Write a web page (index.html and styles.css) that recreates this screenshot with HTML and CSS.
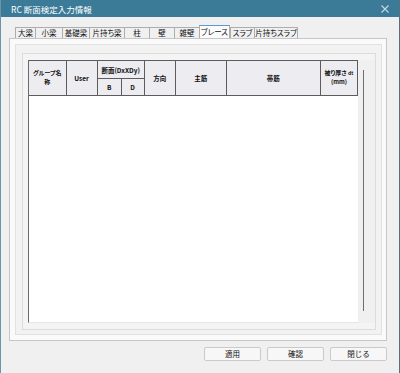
FILE: index.html
```html
<!DOCTYPE html>
<html lang="ja">
<head>
<meta charset="utf-8">
<link rel="stylesheet" href="styles.css">
</head>
<body>
<div class="window">
  <div class="titlebar">
    <span class="title">RC 断面検定入力情報</span>
    <svg class="close" width="10" height="10" viewBox="0 0 10 10"><path d="M1.5 1.5 L8.5 8.5 M8.5 1.5 L1.5 8.5" stroke="#c9d8e0" stroke-width="1.1" fill="none"/></svg>
  </div>
  <div class="content">
    <div class="tabs">
      <div class="tab w20">大梁</div>
      <div class="tab w27">小梁</div>
      <div class="tab w27">基礎梁</div>
      <div class="tab w35">片持ち梁</div>
      <div class="tab w25">柱</div>
      <div class="tab w25">壁</div>
      <div class="tab w25">雑壁</div>
      <div class="tab w31 active">ブレース</div>
      <div class="tab w24">スラブ</div>
      <div class="tab w44">片持ちスラブ</div>
    </div>
    <div class="page">
      <div class="frame-b">
        <div class="frame-c">
          <div class="grid">
            <table class="sheet">
              <colgroup>
                <col class="c1"><col class="c2"><col class="c3"><col class="c4"><col class="c5"><col class="c6"><col class="c7"><col class="c8">
              </colgroup>
              <thead>
                <tr class="r1">
                  <th rowspan="2" class="two"><span class="cell">グループ名<br>称</span></th>
                  <th rowspan="2">User</th>
                  <th colspan="2">断面(DxXDy)</th>
                  <th rowspan="2">方向</th>
                  <th rowspan="2">主筋</th>
                  <th rowspan="2">帯筋</th>
                  <th rowspan="2" class="two"><span class="cell">被り厚さ <span class="dt">dt</span><br>(mm)</span></th>
                </tr>
                <tr class="r2">
                  <th>B</th>
                  <th>D</th>
                </tr>
              </thead>
            </table>
          </div>
          <div class="strip"><div class="strip-line"></div></div>
        </div>
      </div>
    </div>
    <div class="buttons">
      <button class="btn">適用</button>
      <button class="btn">確認</button>
      <button class="btn">閉じる</button>
    </div>
  </div>
</div>
</body>
</html>
```

FILE: styles.css
```css
html, body {
  margin: 0;
  padding: 0;
  background: #f0f0f0;
}
body {
  font-family: "Noto Sans CJK JP", "Noto Sans", sans-serif;
  font-feature-settings: "palt";
}
.window {
  width: 400px;
  height: 373px;
  box-sizing: border-box;
  border-left: 1px solid #6d95a8;
  border-right: 1px solid #55707e;
  background: #f0f0f0;
  display: flex;
  flex-direction: column;
}
.titlebar {
  height: 17px;
  background: #3b7b97;
  display: flex;
  align-items: center;
  justify-content: space-between;
  padding: 0 9px 0 10px;
  flex: none;
}
.title {
  color: #ffffff;
  font-size: 8.5px;
  line-height: 10px;
}
.close {
  display: block;
}
.content {
  padding: 8px 12px 0 8px;
  display: flex;
  flex-direction: column;
}
.tabs {
  display: flex;
  align-items: flex-end;
  height: 13px;
  margin-left: 6px;
}
.tab {
  height: 11px;
  box-sizing: border-box;
  border: 1px solid #adadad;
  border-bottom: none;
  border-right: none;
  background: #f0f0f0;
  font-size: 7.5px;
  line-height: 10px;
  text-align: center;
  color: #111;
  white-space: nowrap;
  overflow: hidden;
  font-feature-settings: "palt";
}
.tab.w44 { border-right: 1px solid #adadad; }
.tab.active {
  height: 13px;
  background: #fbfbfb;
  border-top: 1px solid #5a9ad8;
  border-right: 1px solid #adadad;
  line-height: 12px;
}
.w20 { width: 20px; }
.w24 { width: 24px; }
.w25 { width: 25px; }
.w27 { width: 27px; }
.w31 { width: 31px; }
.w35 { width: 35px; }
.w44 { width: 44px; }
.page {
  height: 303px;
  box-sizing: border-box;
  border: 1px solid #c6c6c6;
  background: #fafafa;
  padding: 5px;
  display: flex;
}
.frame-b {
  flex: 1;
  box-sizing: border-box;
  border: 1px solid #e2e2e2;
  background: #f2f2f2;
  padding: 8px 5px 4px 6px;
  display: flex;
}
.frame-c {
  flex: 1;
  box-sizing: border-box;
  border: 1px solid #dcdcdc;
  background: #f4f4f4;
  padding: 6px 0 6px 5px;
  display: flex;
}
.grid {
  width: 330px;
  box-sizing: border-box;
  background: #ffffff;
  border-left: 1px solid #6a6a6a;
  border-bottom: 1px solid #e6e6e6;
}
.sheet {
  border-collapse: collapse;
  table-layout: fixed;
  width: 329px;
}
.c1 { width: 37px; }
.c2 { width: 31px; }
.c3 { width: 24px; }
.c4 { width: 23px; }
.c5 { width: 31px; }
.c6 { width: 51px; }
.c7 { width: 94px; }
.c8 { width: 37px; }
.sheet th {
  border: 1px solid #5c5c5c;
  background: #ececf1;
  font-size: 6.5px;
  font-weight: bold;
  line-height: 8px;
  padding: 0;
  color: #111;
  text-align: center;
  white-space: nowrap;
  font-family: "Noto Sans CJK JP", "Noto Sans", sans-serif;
  font-feature-settings: "palt";
}
.sheet th:first-child { border-left: none; }
.sheet .r1 th { height: 17px; }
.sheet .r2 th { height: 16px; }
.sheet th.two { font-size: 6px; }
.cell {
  display: inline-block;
  line-height: 8.8px;
}
.dt { font-size: 5px; }
.strip {
  width: 17px;
  box-sizing: border-box;
  padding: 10px 0 12px 5px;
  background: #f0f0f0;
}
.strip-line {
  width: 1px;
  height: 100%;
  background: #6e6e6e;
}
.buttons {
  display: flex;
  justify-content: flex-end;
  gap: 6px;
  margin-top: 6px;
}
.btn {
  width: 57px;
  height: 14px;
  box-sizing: border-box;
  border: 1px solid #cacaca;
  border-radius: 2px;
  background: #f7f7f7;
  font-size: 7.5px;
  line-height: 12px;
  padding: 0;
  color: #111;
  font-family: "Noto Sans CJK JP", "Noto Sans", sans-serif;
}
```
